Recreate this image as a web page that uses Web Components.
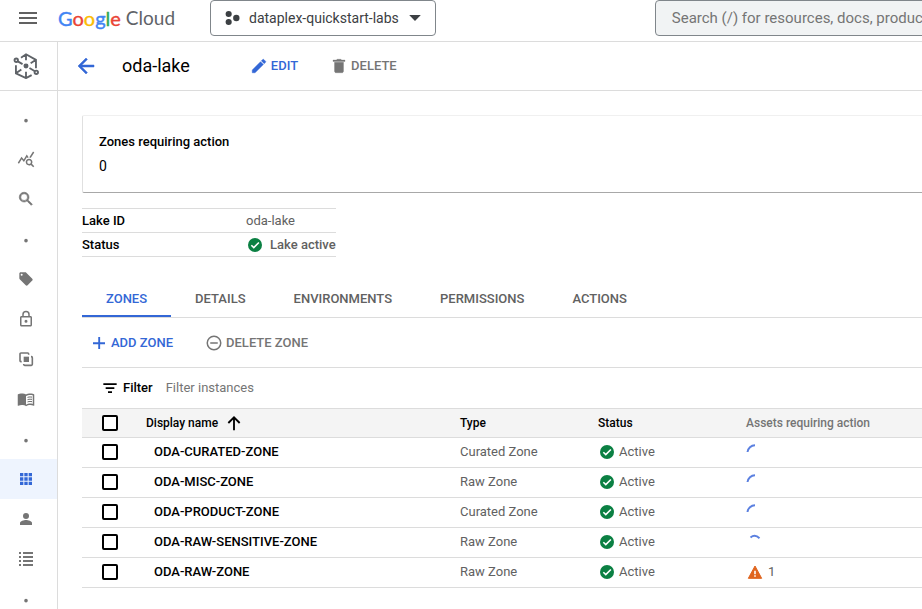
<!DOCTYPE html>
<html lang="en">
<head>
<meta charset="utf-8">
<title>oda-lake – Dataplex</title>
<style>
  html, body { height: 100%; margin: 0; }
  body {
    font-family: Roboto, "Liberation Sans", sans-serif;
    font-size: 13px;
    line-height: 20px;
    color: #000;
    background: #fff;
    overflow: hidden;
    --blue: #3367d6;
    --grey: #757575;
    --text: #616161;
    --line: #dcdcdc;
  }
</style>
</head>
<body>
<cloud-app></cloud-app>
<script>
const ICONS = {
  menu: '<path d="M3 6h18v2H3zM3 11h18v2H3zM3 16h18v2H3z"/>',
  project: '<circle cx="7" cy="6" r="4.600"/><circle cx="7" cy="18" r="4.600"/><circle cx="18.500" cy="12" r="4.800"/>',
  caret: '<path d="M2 7h20L12 17z"/>',
  back: '<path d="M20 11H7.830l5.590-5.590L12 4l-8 8 8 8 1.410-1.410L7.830 13H20z" stroke="currentColor" stroke-width=".5"/>',
  edit: '<path d="M3 17.250V21h3.750L17.810 9.940l-3.750-3.750zM20.710 7.040a1 1 0 0 0 0-1.410l-2.340-2.340a1 1 0 0 0-1.410 0l-1.830 1.830 3.750 3.750z" stroke="currentColor" stroke-width=".6"/>',
  trash: '<path d="M6 19c0 1.100.9 2 2 2h8c1.100 0 2-.9 2-2V7H6zM20 4h-4.500l-1-1h-5l-1 1H4v2h16z" stroke="currentColor" stroke-width=".4"/>',
  lake: '<g fill="none" stroke="currentColor" stroke-width="1.700"><path d="M7.400 4.300 12 1.200 21.200 6.300V14M2.700 11.200V18.800L12 23.200 17.200 20.400M12 1.200V6.600M21.200 6.300 16.300 9.400M2.700 18.800 7.700 15.300M12 23.200V17.400M4.400 7.700 8.800 10.300M15.200 13.900 20.200 16.900"/><circle cx="3" cy="6.700" r="1.600"/><circle cx="21.500" cy="17.800" r="1.600"/></g><circle cx="12" cy="12" r="2.300"/>',
  dot: '<circle cx="12" cy="14.500" r="2.700"/>',
  explore: '<path d="M19.880 18.470c.44-.7.7-1.510.7-2.390 0-2.490-2.010-4.500-4.500-4.500s-4.500 2.010-4.500 4.500 2.010 4.500 4.490 4.500c.88 0 1.700-.26 2.390-.7L21.580 23 23 21.580zm-3.800.11a2.500 2.500 0 1 1 0-5 2.500 2.500 0 0 1 0 5m-.36-8.500c-.74.02-1.450.18-2.100.45l-.55-.83-3.800 6.180-3.010-3.520-3.630 5.810L1 17l5-8 3 3.500L13 6zm2.590.5c-.64-.28-1.330-.45-2.050-.49L21.380 2 23 3.180z"/>',
  search: '<path d="M15.500 14h-.79l-.28-.27A6.470 6.470 0 0 0 16 9.500 6.500 6.500 0 1 0 9.500 16c1.610 0 3.090-.59 4.230-1.570l.27.28v.79l5 4.990L20.490 19zm-6 0a4.500 4.500 0 1 1 0-9 4.500 4.500 0 0 1 0 9" stroke="currentColor" stroke-width=".8"/>',
  tag: '<path d="m21.410 11.580-9-9C12.050 2.220 11.550 2 11 2H4c-1.100 0-2 .9-2 2v7c0 .55.22 1.050.59 1.420l9 9c.36.36.86.58 1.410.58s1.050-.22 1.410-.59l7-7c.37-.36.59-.86.59-1.410s-.23-1.060-.59-1.420M5.500 7a1.500 1.500 0 1 1 0-3 1.500 1.500 0 0 1 0 3"/>',
  lock: '<path d="M18 8h-1V6A5 5 0 0 0 7 6v2H6c-1.100 0-2 .9-2 2v10c0 1.100.9 2 2 2h12c1.100 0 2-.9 2-2V10c0-1.100-.9-2-2-2M9 6a3 3 0 0 1 6 0v2H9zm9 14H6V10h12zm-6-3a2 2 0 1 0 0-4 2 2 0 0 0 0 4"/>',
  copies: '<path d="M8.500 8.500h8v8h-8z"/><path d="M5.500 16H4.500A1.500 1.500 0 0 1 3 14.500v-10A1.500 1.500 0 0 1 4.500 3h10A1.500 1.500 0 0 1 16 4.500v1M19.500 8.500h.5a1.500 1.500 0 0 1 1.500 1.500v10a1.500 1.500 0 0 1-1.500 1.500H10A1.500 1.500 0 0 1 8.500 20v-.5" fill="none" stroke="currentColor" stroke-width="2.400"/>',
  book: '<path d="M21 5c-1.110-.35-2.330-.5-3.500-.5-1.950 0-4.050.4-5.500 1.500-1.450-1.100-3.550-1.500-5.500-1.500S2.450 4.900 1 6v14.650c0 .25.25.5.5.5.1 0 .15-.05.25-.05C3.100 20.450 5.050 20 6.500 20c1.950 0 4.050.4 5.500 1.500 1.350-.85 3.800-1.500 5.500-1.500 1.650 0 3.350.3 4.750 1.050.1.050.15.050.25.050.25 0 .5-.25.5-.5V6c-.6-.45-1.250-.75-2-1m0 13.500c-1.100-.35-2.300-.5-3.500-.5-1.700 0-4.150.65-5.500 1.500V8c1.350-.85 3.800-1.500 5.500-1.500 1.200 0 2.400.15 3.500.5z"/><path d="M14 9.300c2-.8 4-.8 6-.5v1.500c-2-.3-4-.3-6 .5zM14 12.300c2-.8 4-.8 6-.5v1.500c-2-.3-4-.3-6 .5zM14 15.300c2-.8 4-.8 6-.5v1.500c-2-.3-4-.3-6 .5z"/>',
  grid: '<path d="M3 3h5v5H3zM9.500 3h5v5h-5zM16 3h5v5h-5zM3 9.500h5v5H3zM9.500 9.500h5v5h-5zM16 9.500h5v5h-5zM3 16h5v5H3zM9.500 16h5v5h-5zM16 16h5v5h-5z"/>',
  person: '<circle cx="12" cy="7.500" r="4.500"/><path d="M12 13.500c-3 0-9 1.500-9 4.500v3h18v-3c0-3-6-4.500-9-4.500"/>',
  list: '<path d="M1.500 1.500h3v3h-3zM7.500 1.500h15v3h-15zM1.500 7.500h3v3h-3zM7.500 7.500h15v3h-15zM1.500 13.500h3v3h-3zM7.500 13.500h15v3h-15zM1.500 19.500h3v3h-3zM7.500 19.500h15v3h-15z"/>',
  check: '<circle cx="12" cy="12" r="10.500" fill="#0b8043"/><path d="m6.500 12.300 3.700 3.700 7.600-7.700" fill="none" stroke="#fff" stroke-width="2.400"/>',
  plus: '<path d="M11 4h2.500v7H20v2.500h-6.500V20H11v-6.500H4V11h7z"/>',
  minus: '<path d="M7 11v2h10v-2zm5-9a10 10 0 1 0 0 20 10 10 0 0 0 0-20m0 18a8 8 0 1 1 0-16 8 8 0 0 1 0 16"/>',
  filter: '<path d="M2 5h20v2.500H2zM5.500 11h13v2.500h-13zM9 17h6v2.500H9z"/>',
  up: '<path d="M12 3.500V23M3.500 12 12 3.500 20.500 12" fill="none" stroke="currentColor" stroke-width="2.800"/>',
  warn: '<path d="M2 21.500h20L12 3z" fill="#e0651f" stroke="#e0651f" stroke-width="1.500" stroke-linejoin="round"/><path d="M10.800 10h2.400v5.500h-2.400zM10.800 17h2.400v2.300h-2.400z" fill="#fff"/>',
  loadleft: '<path d="M2 12A10 10 0 0 1 12 3" fill="none" stroke="#5b80e0" stroke-width="2.600"/>',
  loadtop: '<path d="M6 6q6-5 12 1" fill="none" stroke="#5b80e0" stroke-width="2.600"/>'
};

/* Base class: renders the markup that a subclass returns into an open shadow root. */
class Base extends HTMLElement {
  connectedCallback() {
    if (this.shadowRoot) return;
    this.attachShadow({ mode: 'open' }).innerHTML = this.render();
  }
}

customElements.define('c-icon', class extends Base {
  render() {
    const s = this.getAttribute('size') || 18;
    return `<style>:host{display:inline-flex;flex:none} svg{display:block;fill:currentColor}</style>
      <svg width="${s}" height="${s}" viewBox="0 0 24 24" aria-hidden="true">${ICONS[this.getAttribute('name')]}</svg>`;
  }
});

customElements.define('cloud-header', class extends Base {
  render() {
    return `<style>
      :host{display:flex;align-items:flex-start;height:41px;border-bottom:1px solid var(--line);overflow:hidden}
      button{font:inherit;background:none;padding:0;border:0;cursor:pointer;color:#3c4043}
      .menu{display:flex;flex:none;color:#616161;padding:6px 18px 6px 16px}
      .brand{display:flex;gap:5px;flex:0 0 152px;font:19px/36px Lato,sans-serif;color:#5f6368;text-decoration:none;white-space:nowrap}
      .google{font-size:20px}
      .brand b{font-weight:400;-webkit-text-stroke:.4px currentColor}
      .b{color:#4285f4}.r{color:#ea4335}.y{color:#fbbc04}.g{color:#34a853}
      .picker,input{box-sizing:border-box;height:36px;border:1px solid #80868b;border-radius:4px;font-size:14px}
      .picker{display:flex;align-items:center;gap:9px;padding:0 13px;flex:none}
      .gap{flex:0 0 219px}
      input{flex:1 0 480px;padding:0 16px;background:#f1f3f4;font-family:inherit;font-size:15px}
      input::placeholder{color:#757575;opacity:1}
    </style>
    <button class="menu" aria-label="Main menu"><c-icon name="menu" size="24"></c-icon></button>
    <a class="brand" href="#"><span class="google"><b class="b">G</b><b class="r">o</b><b class="y">o</b><b class="b">g</b><b class="g">l</b><b class="r">e</b></span><span>Cloud</span></a>
    <button class="picker"><c-icon name="project" size="16"></c-icon><span>dataplex-quickstart-labs</span><c-icon name="caret" size="14"></c-icon></button>
    <span class="gap"></span>
    <input type="search" aria-label="Search" placeholder="Search (/) for resources, docs, products, and more">`;
  }
});

customElements.define('rail-item', class extends Base {
  render() {
    return `<style>
      :host{display:block}
      a{display:flex;justify-content:center;align-items:center;height:40px;padding-right:5px;color:#757575}
      :host([active]) a{background:#eef4fe;color:var(--blue)}
    </style><a href="#" aria-label="${this.getAttribute('label')}"><c-icon name="${this.getAttribute('icon')}" size="${this.getAttribute('size') || 16}"></c-icon></a>`;
  }
});

customElements.define('side-rail', class extends Base {
  render() {
    const items = [['dot','Section'],['explore','Explore',18],['search','Search',18],['dot','Section'],['tag','Tags'],['lock','Policies',18],
      ['copies','Process'],['book','Glossaries',18],['dot','Section'],['grid','Manage'],['person','Access'],['list','Logs'],['dot','Section']];
    return `<style>
      :host{display:block;flex:0 0 57px;border-right:1px solid var(--line);overflow:hidden}
      .logo{display:flex;align-items:center;justify-content:center;height:48px;padding-right:5px;border-bottom:1px solid var(--line);color:#5f6368}
      nav{padding-top:8px}
    </style>
    <div class="logo"><c-icon name="lake" size="26"></c-icon></div>
    <nav aria-label="Dataplex">${items.map(([i, l, s]) => `<rail-item icon="${i}" label="${l}" ${s ? `size="${s}"` : ''} ${i === 'grid' ? 'active' : ''}></rail-item>`).join('')}</nav>`;
  }
});

customElements.define('action-button', class extends Base {
  render() {
    return `<style>
      :host{display:inline-flex;color:var(--grey)}
      :host([primary]){color:var(--blue)}
      button{display:flex;align-items:center;gap:3px;font:500 13px/20px Roboto,sans-serif;color:inherit;background:none;border:0;padding:0;cursor:pointer;white-space:nowrap}
    </style><button><c-icon name="${this.getAttribute('icon')}" size="${this.getAttribute('size') || 18}"></c-icon><slot></slot></button>`;
  }
});

customElements.define('title-bar', class extends Base {
  render() {
    return `<style>
      :host{display:flex;align-items:center;height:48px;border-bottom:1px solid var(--line);padding-left:16px}
      a{display:flex;color:var(--blue)}
      h1{font-size:18px;font-weight:400;margin:0 60px 0 24px;white-space:nowrap}
      .actions{display:flex;gap:32px}
    </style>
    <a href="#" aria-label="Back"><c-icon name="back" size="24"></c-icon></a>
    <h1><slot></slot></h1>
    <div class="actions"><action-button icon="edit" primary>EDIT</action-button><action-button icon="trash">DELETE</action-button></div>`;
  }
});

customElements.define('stat-card', class extends Base {
  render() {
    return `<style>
      :host{display:block;padding:16px;border:1px solid #f0f0f0;border-left-color:#e0e0e0;border-bottom-color:#a8a8a8;border-right:0;border-radius:2px 0 0 2px}
      h2{font-size:13px;font-weight:500;margin:0 0 4px}
      p{font-size:14px;margin:0}
    </style><h2>${this.getAttribute('label')}</h2><p><slot></slot></p>`;
  }
});

customElements.define('lake-info', class extends Base {
  render() {
    return `<style>
      :host{display:block}
      table{border-collapse:collapse;border-top:1px solid var(--line)}
      th,td{height:23px;padding:0;border-bottom:1px solid var(--line);text-align:left}
      th{width:164px;font-weight:500}
      td{color:var(--text)}
      .s{display:flex;align-items:center;gap:7px;font-weight:500;padding-left:1px}
    </style>
    <table><tr><th scope="row">Lake ID</th><td>oda-lake</td></tr>
    <tr><th scope="row">Status</th><td><span class="s"><c-icon name="check" size="16"></c-icon>Lake active</span></td></tr></table>`;
  }
});

customElements.define('tab-bar', class extends Base {
  render() {
    return `<style>
      :host{display:flex;border-bottom:1px solid var(--line)}
      button{font:500 13px/20px Roboto,sans-serif;color:#616161;background:none;border:0;border-bottom:2px solid transparent;padding:8px 24px 6px;cursor:pointer}
      button[aria-selected=true]{color:var(--blue);border-color:var(--blue)}
    </style>${['ZONES','DETAILS','ENVIRONMENTS','PERMISSIONS','ACTIONS'].map((t, i) => `<button role="tab" aria-selected="${i === 0}">${t}</button>`).join('')}`;
  }
});

customElements.define('filter-bar', class extends Base {
  render() {
    return `<style>
      :host{display:flex;align-items:center;height:40px;padding-left:20px}
      label{display:flex;align-items:center;gap:5px;font-weight:500}
      input{flex:1;border:0;outline:0;padding:0 0 0 13px;font:inherit;background:none}
      input::placeholder{color:#757575;opacity:1}
    </style><label for="f"><c-icon name="filter" size="16"></c-icon>Filter</label><input id="f" placeholder="Filter instances">`;
  }
});

customElements.define('zone-table', class extends Base {
  render() {
    const rows = [['ODA-CURATED-ZONE','Curated Zone','loadleft'],['ODA-MISC-ZONE','Raw Zone','loadleft'],['ODA-PRODUCT-ZONE','Curated Zone','loadleft'],
      ['ODA-RAW-SENSITIVE-ZONE','Raw Zone','loadtop'],['ODA-RAW-ZONE','Raw Zone','warn']];
    return `<style>
      :host{display:block}
      table{width:100%;table-layout:fixed;border-collapse:separate;border-spacing:0}
      th,td{padding:0;text-align:left;border-bottom:1px solid var(--line);white-space:nowrap}
      thead th{height:28px;background:#f4f4f4;font-size:12px;font-weight:500;border-top:1px solid var(--line)}
      tbody th,tbody td{height:28px;padding-bottom:1px}
      tbody th{font-weight:500;padding-left:8px}
      td{color:var(--text)}
      .c{width:64px}.n{width:314px}.t{width:138px}.s{width:148px}
      thead th.a{color:#757575}
      .row{display:flex;align-items:center;gap:4px}
      td .row{padding-left:1px}
      .row.sort{gap:8px}
      .row.warn{gap:5px}
      .spin{display:flex;align-items:flex-start;height:18px}
      input{appearance:none;display:block;box-sizing:border-box;width:16px;height:16px;margin:0 0 0 20px;border:2px solid #000;border-radius:2px;background:#fff}
    </style>
    <table><thead><tr><th class="c" scope="col"><input type="checkbox" aria-label="Select all zones"></th>
      <th class="n" scope="col"><span class="row sort">Display name<c-icon name="up" size="16"></c-icon></span></th>
      <th class="t" scope="col">Type</th><th class="s" scope="col">Status</th><th class="a" scope="col">Assets requiring action</th></tr></thead>
    <tbody>${rows.map(([n, t, a]) => `<tr><td><input type="checkbox" aria-label="Select ${n}"></td><th scope="row">${n}</th><td>${t}</td>
      <td><span class="row"><c-icon name="check" size="16"></c-icon>Active</span></td>
      <td>${a === 'warn' ? '<span class="row warn"><c-icon name="warn" size="16"></c-icon>1</span>' : `<span class="spin"><c-icon name="${a}" size="18"></c-icon></span>`}</td></tr>`).join('')}</tbody></table>`;
  }
});

customElements.define('cloud-app', class extends Base {
  render() {
    return `<style>
      :host{display:flex;flex-direction:column;height:100%}
      .body{display:flex;flex:1;min-height:0}
      main{flex:1;min-width:0}
      .content{padding:24px 0 0 24px}
      lake-info{margin:15px 0 24px}
      .tools{display:flex;align-items:center;gap:32px;height:49px;padding-left:8px;border-bottom:1px solid var(--line)}
    </style>
    <cloud-header></cloud-header>
    <div class="body"><side-rail></side-rail>
      <main><title-bar>oda-lake</title-bar>
        <div class="content">
          <stat-card label="Zones requiring action">0</stat-card>
          <lake-info></lake-info>
          <tab-bar role="tablist"></tab-bar>
          <div class="tools"><action-button icon="plus" primary>ADD ZONE</action-button><action-button icon="minus">DELETE ZONE</action-button></div>
          <filter-bar></filter-bar>
          <zone-table></zone-table>
        </div>
      </main>
    </div>`;
  }
});
</script>
</body>
</html>
